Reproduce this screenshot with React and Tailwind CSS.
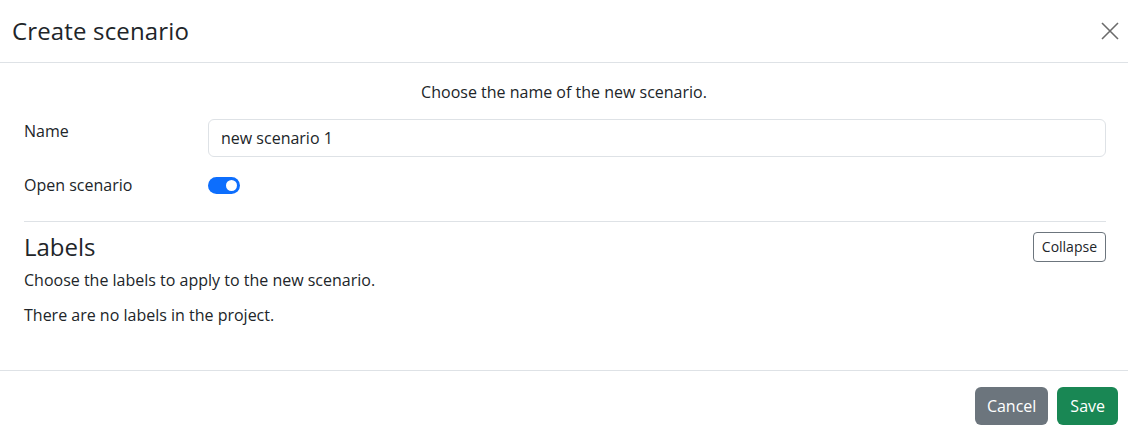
export default function App() {
  return (
    <div className="w-[1128px] h-[432px] bg-white text-[#212529] overflow-hidden" style={{ fontFamily: '"Open Sans", "Noto Sans", sans-serif' }}>
      <div className="h-[63px] flex items-center justify-between pl-[12px] pr-[8px] border-b border-[#dee2e6]">
        <h1 className="text-[24px] leading-[1.2] font-normal tracking-[0.15px]">Create scenario</h1>
        <button className="w-[20px] h-[20px] flex items-center justify-center text-[#6b6b6b]">
          <svg width="20" height="20" viewBox="0 0 20 20" fill="none" stroke="currentColor" strokeWidth="1.6">
            <path d="M2 2L18 18M18 2L2 18" />
          </svg>
        </button>
      </div>
      <div className="pl-[24px] pr-[22px] pt-[17px] h-[308px] border-b border-[#dee2e6]">
        <p className="text-center text-[16px] leading-[24px] -ml-[2px]">Choose the name of the new scenario.</p>
        <div className="flex items-start mt-[15px]">
          <label className="w-[184px] text-[16px] leading-[24px]">Name</label>
          <input
            className="flex-1 h-[38px] border border-[#dee2e6] rounded-[6px] px-[12px] text-[16px] outline-none"
            defaultValue="new scenario 1"
            style={{ fontFamily: '"Open Sans", "Noto Sans", sans-serif' }}
          />
        </div>
        <div className="flex items-center mt-[16px] h-[24px]">
          <span className="w-[184px] text-[16px] leading-[24px]">Open scenario</span>
          <div className="w-[32px] h-[17px] rounded-full bg-[#0d6efd] flex items-center justify-end pr-[3px]">
            <div className="w-[11px] h-[11px] rounded-full bg-white" />
          </div>
        </div>
        <div className="border-t border-[#dee2e6] mt-[24px]" />
        <div className="flex items-center justify-between mt-[10px]">
          <h2 className="text-[24px] leading-[1.2] font-normal">Labels</h2>
          <button className="h-[30px] px-[8px] border border-[#6c757d] rounded-[4px] text-[14px] leading-[20px] text-[#212529]">Collapse</button>
        </div>
        <p className="text-[16px] leading-[24px] mt-[6px]">Choose the labels to apply to the new scenario.</p>
        <p className="text-[16px] leading-[24px] mt-[11px]">There are no labels in the project.</p>
      </div>
      <div className="flex justify-end items-center gap-[9px] pr-[10px] pt-[16px]">
        <button className="h-[38px] px-[12px] rounded-[6px] bg-[#6c757d] text-white text-[16px]">Cancel</button>
        <button className="h-[38px] px-[13px] rounded-[6px] bg-[#198754] text-white text-[16px]">Save</button>
      </div>
    </div>
  );
}
